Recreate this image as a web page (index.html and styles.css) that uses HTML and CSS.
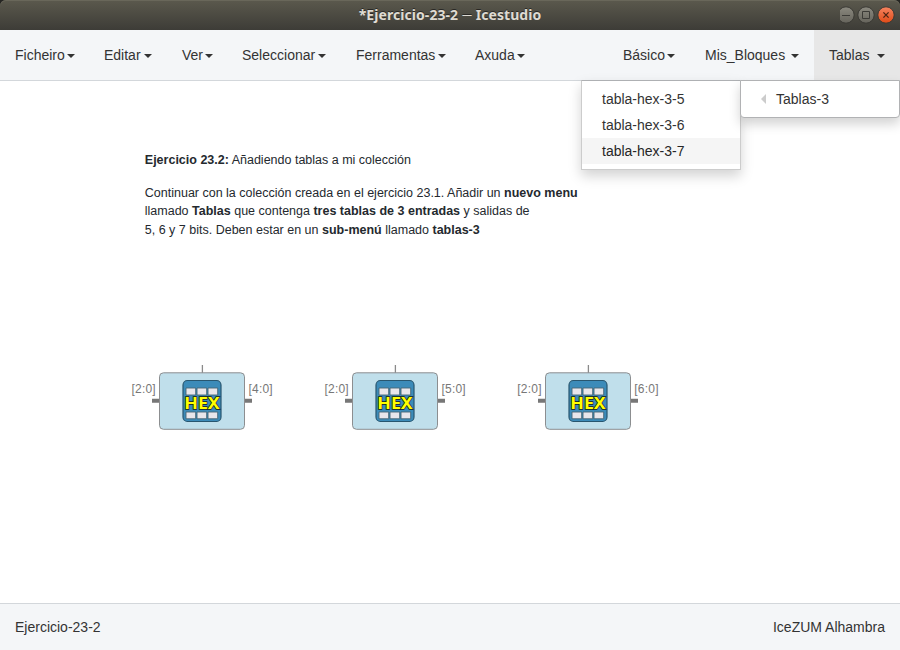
FILE: index.html
```
<!DOCTYPE html>
<html lang="gl">
<head>
<meta charset="utf-8">
<title>Icestudio</title>
<link rel="stylesheet" href="styles.css">
</head>
<body>
<div class="window">
  <header class="titlebar">
    <h1 class="title">*Ejercicio-23-2 <span class="dash">—</span> Icestudio</h1>
    <svg class="controls" width="60" height="30" viewBox="840 0 60 30">
      <defs>
        <linearGradient id="grey" x1="0" y1="0" x2="0" y2="1"><stop offset="0" stop-color="#8b897f"/><stop offset="1" stop-color="#65635b"/></linearGradient>
        <linearGradient id="red" x1="0" y1="0" x2="0" y2="1"><stop offset="0" stop-color="#f58460"/><stop offset="1" stop-color="#df4a16"/></linearGradient>
      </defs>
      <g stroke="#393833"><circle cx="846" cy="15" r="8.2" fill="url(#grey)"/><circle cx="866" cy="15" r="8.2" fill="url(#grey)"/><circle cx="886" cy="15" r="8.2" fill="url(#red)"/></g>
      <path d="M842 15.5h8M862.5 11.5h7v7h-7z" fill="none" stroke="#3c3b37"/>
      <path d="M883.4 12.4l5.2 5.2M888.6 12.4l-5.2 5.2" stroke="#4b2413" stroke-width="1.3"/>
    </svg>
  </header>
  <nav class="menubar">
    <div class="menu">
      <a class="item">Ficheiro<i class="caret"></i></a>
      <a class="item">Editar<i class="caret"></i></a>
      <a class="item">Ver<i class="caret"></i></a>
      <a class="item">Seleccionar<i class="caret"></i></a>
      <a class="item">Ferramentas<i class="caret"></i></a>
      <a class="item">Axuda<i class="caret"></i></a>
    </div>
    <div class="collections">
      <a class="item">Básico<i class="caret"></i></a>
      <a class="item">Mis_Bloques<i class="caret"></i></a>
      <a class="item open">Tablas<i class="caret"></i></a>
    </div>
  </nav>
  <div class="dropdown">
    <ul class="submenu">
      <li>tabla-hex-3-5</li>
      <li>tabla-hex-3-6</li>
      <li class="hover">tabla-hex-3-7</li>
    </ul>
    <div class="group"><i class="arrow"></i><span>Tablas-3</span></div>
  </div>
  <main class="canvas">
    <div class="note">
      <p class="heading"><b>Ejercicio 23.2:</b> Añadiendo tablas a mi colección</p>
      <p class="first">Continuar con la colección creada en el ejercicio 23.1. Añadir un <b>nuevo menu</b></p>
      <p>llamado <b>Tablas</b> que contenga <b>tres tablas de 3 entradas</b> y salidas de</p>
      <p>5, 6 y 7 bits. Deben estar en un <b>sub-menú</b> llamado <b>tablas-3</b></p>
    </div>
    <svg class="diagram" width="560" height="80" viewBox="120 360 560 80">
      <defs>
        <g id="block">
          <path d="M202.4 365v8" stroke="#8a8a8a" stroke-width="1.3"/>
          <path d="M152 400.8h8M244 400.8h8" stroke="#777" stroke-width="4"/>
          <rect x="159.5" y="372.8" width="85" height="56.5" rx="4" fill="#c0dfeb" stroke="#8c8e90"/>
          <rect x="183" y="380.5" width="38" height="41" rx="4.5" fill="#3c8bb9" stroke="#28566f" stroke-width="1.2"/>
          <path d="M186 388h9.7v7H186zM197 388h9.7v7H197zM208 388h9.7v7H208zM186 412h9.7v6.8H186zM197 412h9.7v6.8H197zM208 412h9.7v6.8H208z" fill="#e8e6eb" stroke="#456475" stroke-width=".9"/>
          <text class="hex" x="184.3" y="408.8" textLength="35.5" lengthAdjust="spacingAndGlyphs">HEX</text>
        </g>
      </defs>
      <use href="#block"/><use href="#block" x="193"/><use href="#block" x="386"/>
      <g class="port">
        <text x="131.5" y="393" textLength="24.2">[2:0]</text><text x="248.5" y="393" textLength="24.2">[4:0]</text>
        <text x="324.5" y="393" textLength="24.2">[2:0]</text><text x="441.5" y="393" textLength="24.2">[5:0]</text>
        <text x="517.3" y="393" textLength="24.2">[2:0]</text><text x="634.3" y="393" textLength="24.2">[6:0]</text>
      </g>
    </svg>
  </main>
  <footer class="status"><span>Ejercicio-23-2</span><span>IceZUM Alhambra</span></footer>
</div>
</body>
</html>
```
FILE: styles.css
```
* { box-sizing: border-box; }
body { margin: 0; background: #252522; font: 14px/20px "Liberation Sans", Arial, sans-serif; color: #333; }
.window { position: relative; display: flex; flex-direction: column; width: 900px; height: 650px; }
.titlebar { position: relative; height: 30px; border-radius: 6px 6px 0 0; background: linear-gradient(#5b594d, #3d3c37); box-shadow: inset 0 1px #69675a; }
.title { margin: 0; text-align: center; font: bold 14px/30px "Noto Sans", sans-serif; letter-spacing: .07px; color: #dfdbd2; text-shadow: 0 -1px #292825; }
.dash { font-size: 10px; font-weight: 400; line-height: 1; vertical-align: 2px; }
.controls { position: absolute; right: 0; top: 0; }
.menubar { display: flex; justify-content: space-between; height: 51px; background: #f4f6f8; border-bottom: 1px solid #d3d7db; }
.menu { display: grid; grid-template-columns: 89px 78px 60px 114px 119px 50px; padding-left: 15px; }
.menu .item { padding-right: 30px; }
.menu .item:nth-child(1), .menu .item:nth-child(3), .menu .item:nth-child(5) { padding-right: 29px; }
.menu .item:last-child { padding-right: 0; }
.collections { display: grid; grid-template-columns: 82px 124px 86px; }
.item { display: flex; align-items: center; justify-content: space-between; white-space: nowrap; }
.collections .item { padding: 0 15px; }
.open { background: #e7e7e7; }
.caret { flex: none; margin-top: 2px; border: 4px solid transparent; border-top-color: #333; border-bottom: 0; }
.dropdown { position: absolute; left: 581px; top: 80px; width: 319px; display: flex; align-items: flex-start; }
.submenu { width: 160px; height: 90px; margin: 0; padding: 5px 0 6px; list-style: none; background: #fff; border: 1px solid #ccc; border-top-color: #aeb0b3; box-shadow: 0 6px 12px rgba(0,0,0,.175); }
.submenu li { height: 26px; padding-left: 20px; line-height: 26px; }
.submenu .hover { background: #f5f5f5; color: #262626; }
.group { flex: 1; display: flex; align-items: center; height: 38px; margin-left: -1px; background: #fff; border: 1px solid #b1b2b4; border-radius: 0 0 4px 4px; box-shadow: 0 6px 12px rgba(0,0,0,.175); }
.arrow { margin: 0 10px 0 20px; border: 5px solid transparent; border-right-color: #ccc; border-left: 0; }
.canvas { flex: 1; background: #fff; }
.note { margin: 70px 0 0 144.8px; font-size: 12.5px; line-height: 19px; color: #24292e; white-space: nowrap; }
.note p { margin: 0; }
.note .heading { margin-bottom: 14px; }
.note .first { line-height: 18px; }
.diagram { display: block; margin: 120px 0 0 120px; }
.port { font-size: 12px; fill: #777; }
.hex { font: bold 16px "Noto Sans", sans-serif; fill: #ff0; stroke: #161b0b; stroke-width: 1.3px; paint-order: stroke; }
.status { display: flex; align-items: center; justify-content: space-between; height: 47px; padding: 0 15px; background: #f4f6f8; border-top: 1px solid #d3d7db; }
```
